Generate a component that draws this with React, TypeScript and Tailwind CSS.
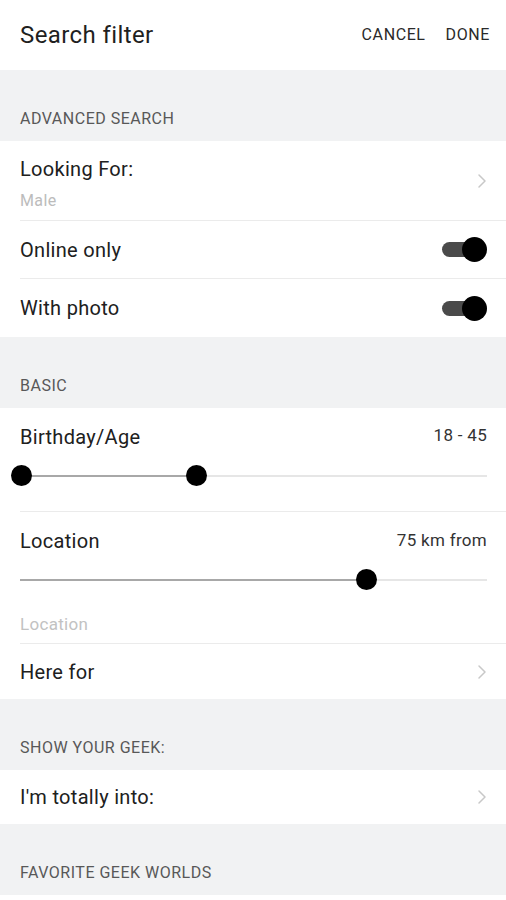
import React from "react";

const Chevron: React.FC = () => (
  <svg width="10" height="16" viewBox="0 0 10 16" fill="none" className="shrink-0">
    <path d="M2 2 L8 8 L2 14" stroke="#c8c8c8" strokeWidth="1.5" strokeLinecap="round" strokeLinejoin="round" />
  </svg>
);

const Toggle: React.FC = () => (
  <div className="relative w-[45px] h-[25px] shrink-0">
    <div className="absolute left-0 top-[5px] w-[38px] h-[15px] rounded-full bg-[#4a4a4a]" />
    <div className="absolute right-0 top-0 w-[25px] h-[25px] rounded-full bg-black" />
  </div>
);

const SectionHeader: React.FC<{ title: string }> = ({ title }) => (
  <div className="bg-[#f1f2f3] h-[71px] flex items-end px-5 pb-[12px]">
    <span className="text-[16px] leading-5 text-[#585858] tracking-[0.5px]">{title}</span>
  </div>
);

type SliderProps = { from: number; to: number; double?: boolean };

// from/to are percentages of the track
const Slider: React.FC<SliderProps> = ({ from, to, double }) => (
  <div className="relative h-[22px] ml-[20px] mr-[19px]">
    <div className="absolute left-0 right-0 top-[10px] h-[2px] bg-[#e6e6e6]" />
    <div
      className="absolute top-[10px] h-[2px] bg-[#a8a8a8]"
      style={{ left: `${from}%`, width: `${to - from}%` }}
    />
    {double && (
      <div
        className="absolute top-0 w-[21px] h-[21px] -ml-[10px] rounded-full bg-black"
        style={{ left: `${from}%` }}
      />
    )}
    <div
      className="absolute top-0 w-[21px] h-[21px] -ml-[10px] rounded-full bg-black"
      style={{ left: `${to}%` }}
    />
  </div>
);

const App: React.FC = () => {
  return (
    <div className="w-[506px] h-[900px] overflow-hidden bg-white text-[#202020] font-['Roboto',sans-serif]">
      <div className="h-[70px] flex items-center justify-between pl-5 pr-[16px]">
        <h1 className="text-[24px] font-normal tracking-[0.4px] text-[#1f1f1f]">Search filter</h1>
        <div className="flex gap-[20px] text-[16px] tracking-[0.6px] text-[#2a2a2a]">
          <button type="button">CANCEL</button>
          <button type="button">DONE</button>
        </div>
      </div>

      <SectionHeader title="ADVANCED SEARCH" />

      <div className="pl-5 text-[20px] tracking-[0.3px]">
        <div className="h-[80px] flex items-center justify-between pr-[19px] border-b border-[#ebebeb]">
          <div className="flex flex-col pt-[7px]">
            <span className="leading-6">Looking For:</span>
            <span className="text-[16px] leading-5 mt-[10px] tracking-[0.4px] text-[#bcbcbc]">Male</span>
          </div>
          <Chevron />
        </div>
        <div className="h-[58px] flex items-center justify-between pr-[19px] border-b border-[#ebebeb]">
          <span>Online only</span>
          <Toggle />
        </div>
        <div className="h-[58px] flex items-center justify-between pr-[19px]">
          <span>With photo</span>
          <Toggle />
        </div>
      </div>

      <SectionHeader title="BASIC" />

      <div className="border-b border-[#ebebeb] ml-5">
        <div className="pt-[17px] pb-[24px] -ml-5">
          <div className="flex justify-between items-start pl-5 pr-[19px]">
            <span className="text-[20px] leading-6 tracking-[0.3px]">Birthday/Age</span>
            <span className="text-[17px] leading-5 tracking-[0.3px] text-[#333]">18 - 45</span>
          </div>
          <div className="mt-[16px] pl-[1px]">
            <Slider from={0} to={37.5} double />
          </div>
        </div>
      </div>

      <div className="ml-5 border-b border-[#ebebeb]">
        <div className="-ml-5 pt-[17px]">
          <div className="flex justify-between items-start pl-5 pr-[19px]">
            <span className="text-[20px] leading-6 tracking-[0.3px]">Location</span>
            <span className="text-[17px] leading-5 tracking-[0.3px] text-[#333] mt-[1px]">75 km from</span>
          </div>
          <div className="mt-[16px]">
            <Slider from={0} to={74} />
          </div>
          <div className="pl-5 pt-[23px] pb-[9px] text-[17px] leading-5 tracking-[0.3px] text-[#c2c2c2]">Location</div>
        </div>
      </div>

      <div className="pl-5 text-[20px] tracking-[0.3px]">
        <div className="h-[55px] flex items-center justify-between pr-[19px]">
          <span>Here for</span>
          <Chevron />
        </div>
      </div>

      <SectionHeader title="SHOW YOUR GEEK:" />

      <div className="pl-5 text-[20px] tracking-[0.3px]">
        <div className="h-[54px] flex items-center justify-between pr-[19px]">
          <span>I'm totally into:</span>
          <Chevron />
        </div>
      </div>

      <SectionHeader title="FAVORITE GEEK WORLDS" />
    </div>
  );
};

export default App;
